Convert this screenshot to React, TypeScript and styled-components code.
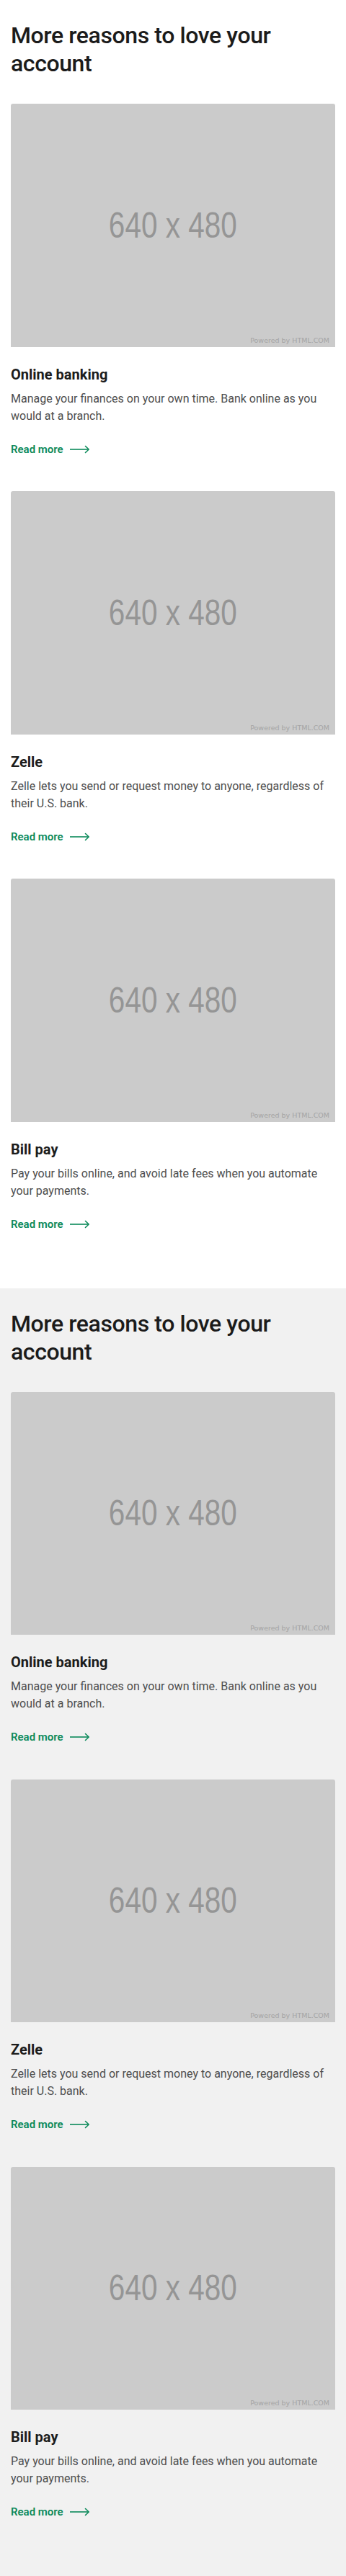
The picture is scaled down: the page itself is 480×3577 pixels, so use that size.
import React from "react";
import styled, { createGlobalStyle } from "styled-components";

const GlobalStyle = createGlobalStyle`
  html, body { margin: 0; padding: 0; }
  body { font-family: Roboto, "Liberation Sans", sans-serif; -webkit-font-smoothing: antialiased; }
  * { box-sizing: border-box; }
`;

const Section = styled.section<{ $bg: string }>`
  background: ${(p) => p.$bg};
  padding: 30px 15px 77px;
`;

const Heading = styled.h2`
  margin: 0 0 36px;
  font-family: Roboto, "Liberation Sans", sans-serif;
  font-size: 32px;
  line-height: 39px;
  font-weight: 500;
  letter-spacing: -0.4px;
  color: #1b1b1b;
`;

const CardList = styled.div`
  display: flex;
  flex-direction: column;
  gap: 46.5px;
`;

const Card = styled.article`
  display: flex;
  flex-direction: column;
`;

const Placeholder = styled.div`
  position: relative;
  width: 100%;
  aspect-ratio: 4 / 3;
  background: #cbcbcb;
  border-radius: 3px 3px 0 0;
  display: flex;
  align-items: center;
  justify-content: center;
`;

const PlaceholderSize = styled.span`
  font-family: "Liberation Sans", Arial, sans-serif;
  font-size: 50px;
  color: #959595;
  transform: scaleX(0.81);
`;

const Powered = styled.span`
  position: absolute;
  right: 8px;
  bottom: 4px;
  font-family: "DejaVu Sans", sans-serif;
  font-size: 9.5px;
  color: #a4a4a4;
`;

const Title = styled.h3`
  margin: 24px 0 0;
  font-size: 20px;
  line-height: 28px;
  font-weight: 700;
  color: #1c1c1c;
`;

const Desc = styled.p`
  margin: 8px 0 0;
  font-size: 16px;
  line-height: 24px;
  color: #4e4e4e;
`;

const ReadMore = styled.a`
  margin-top: 22px;
  display: inline-flex;
  align-items: center;
  gap: 9px;
  align-self: flex-start;
  font-size: 15px;
  line-height: 24px;
  font-weight: 600;
  color: #0c8a5a;
  text-decoration: none;
`;

const Arrow = () => (
  <svg width="28" height="12" viewBox="0 0 28 12" fill="none" stroke="currentColor" strokeWidth="1.6">
    <path d="M0 6H26" />
    <path d="M21.5 1.5L26.2 6L21.5 10.5" strokeLinecap="round" strokeLinejoin="round" />
  </svg>
);

const items = [
  {
    title: "Online banking",
    desc: "Manage your finances on your own time. Bank online as you would at a branch.",
  },
  {
    title: "Zelle",
    desc: "Zelle lets you send or request money to anyone, regardless of their U.S. bank.",
  },
  {
    title: "Bill pay",
    desc: "Pay your bills online, and avoid late fees when you automate your payments.",
  },
];

const Reasons = ({ bg }: { bg: string }) => (
  <Section $bg={bg}>
    <Heading>More reasons to love your account</Heading>
    <CardList>
      {items.map((it) => (
        <Card key={it.title}>
          <Placeholder>
            <PlaceholderSize>640 x 480</PlaceholderSize>
            <Powered>Powered by HTML.COM</Powered>
          </Placeholder>
          <Title>{it.title}</Title>
          <Desc>{it.desc}</Desc>
          <ReadMore href="#">
            Read more <Arrow />
          </ReadMore>
        </Card>
      ))}
    </CardList>
  </Section>
);

export default function App() {
  return (
    <>
      <GlobalStyle />
      <Reasons bg="#ffffff" />
      <Reasons bg="#f1f1f1" />
    </>
  );
}
